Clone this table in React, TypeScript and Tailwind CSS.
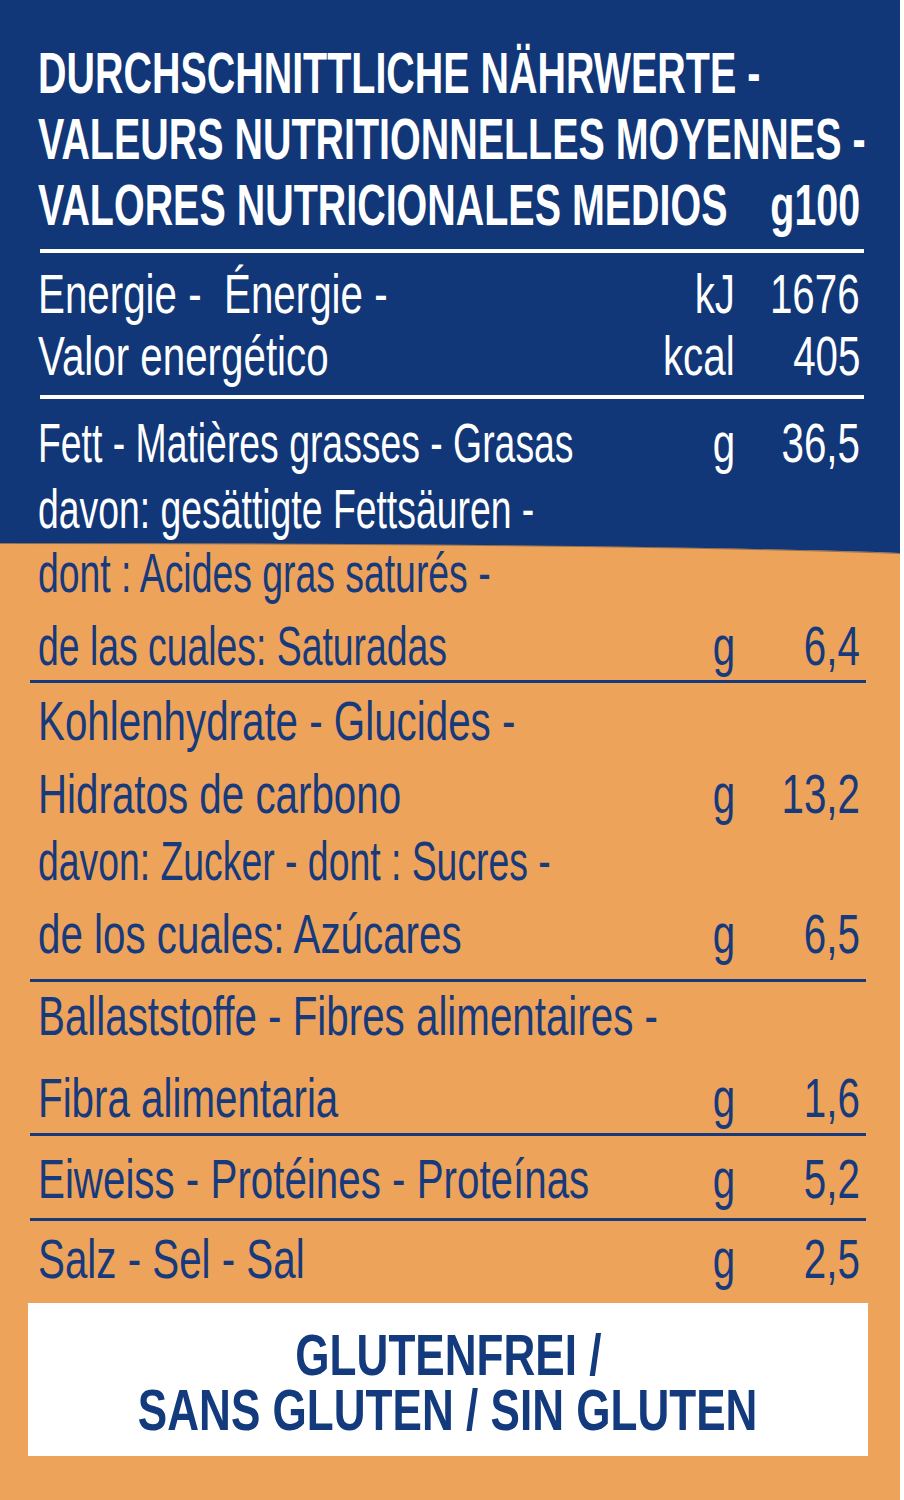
import type { ReactNode } from "react";

const FONT = "font-['Liberation_Sans','Arial',sans-serif]";

// the label type is a condensed grotesk: squeeze Liberation Sans sideways
function Cond({ children, right, tight }: { children: ReactNode; right?: boolean; tight?: boolean }) {
  return (
    <span
      className={`inline-block whitespace-pre ${tight ? "[transform:scaleX(0.667)]" : "[transform:scaleX(0.72)]"} ${
        right ? "origin-right" : "origin-left"
      }`}
    >
      {children}
    </span>
  );
}

function HeadCond({ children, right }: { children: ReactNode; right?: boolean }) {
  return (
    <span
      className={`inline-block whitespace-pre [transform:scaleX(0.68)] ${right ? "origin-right" : "origin-left"}`}
    >
      {children}
    </span>
  );
}

type RowProps = {
  label: string;
  unit?: string;
  value?: string;
  box: string;
  tight?: boolean;
};

function Row({ label, unit, value, box, tight }: RowProps) {
  return (
    <div className={`flex pl-[38px] pr-[40px] text-[56px] ${box}`}>
      <div className="flex-1 min-w-0">
        <Cond tight={tight}>{label}</Cond>
      </div>
      <div className="w-[120px] text-right">{unit && <Cond right>{unit}</Cond>}</div>
      <div className="w-[125px] text-right">{value && <Cond right>{value}</Cond>}</div>
    </div>
  );
}

export default function App() {
  return (
    <div className={`w-[904px] h-[1500px] bg-white overflow-hidden ${FONT}`}>
      <div className="w-[900px] h-[1500px] bg-[#eea35b] text-[#163a7b] flex flex-col">
        {/* Blue block */}
        <div className="relative bg-[#113778] text-white pt-[40px] pb-[1px]">
          <div className="pl-[38px] pr-[40px] text-[58px] font-bold">
            <div className="h-[66px] leading-[66px]">
              <HeadCond>DURCHSCHNITTLICHE NÄHRWERTE -</HeadCond>
            </div>
            <div className="h-[66px] leading-[66px]">
              <HeadCond>VALEURS NUTRITIONNELLES MOYENNES -</HeadCond>
            </div>
            <div className="h-[66px] leading-[66px] flex">
              <div className="flex-1 min-w-0">
                <HeadCond>VALORES NUTRICIONALES MEDIOS</HeadCond>
              </div>
              <div className="text-right">
                <HeadCond right>g100</HeadCond>
              </div>
            </div>
          </div>

          <div className="mt-[11px] h-[4px] ml-[40px] mr-[36px] bg-white" />

          <div className="mt-[10px]">
            <Row label="Energie -  Énergie -" unit="kJ" value="1676" box="h-[62px] leading-[62px]" />
            <Row label="Valor energético" unit="kcal" value="405" box="h-[62px] leading-[62px]" />
          </div>

          <div className="mt-[8px] h-[4px] ml-[40px] mr-[36px] bg-white" />

          <div className="mt-[13px]">
            <Row label="Fett - Matières grasses - Grasas" unit="g" value="36,5" tight box="h-[62px] leading-[62px]" />
          </div>
          <div className="mt-[2px]">
            <Row label="davon: gesättigte Fettsäuren -" tight box="h-[66px] leading-[66px]" />
          </div>

          {/* curved bottom edge */}
          <svg
            className="absolute left-0 top-full"
            width="900"
            height="12"
            viewBox="0 0 900 12"
            preserveAspectRatio="none"
          >
            <path d="M0 0 H900 V10 Q 620 0 0 0 Z" fill="#113778" />
            <path d="M0 0.5 Q 620 0.5 900 10.5" fill="none" stroke="#3a3f4a" strokeOpacity="0.5" strokeWidth="1" />
          </svg>
        </div>

        {/* Orange block */}
        <Row label="dont : Acides gras saturés -" tight box="h-[60px] leading-[60px]" />
        <div className="mt-[12px]">
          <Row label="de las cuales: Saturadas" unit="g" value="6,4" tight box="h-[62px] leading-[62px]" />
        </div>
        <div className="mt-[3px] h-[3px] ml-[30px] mr-[34px] bg-[#163a7b]" />

        <div className="mt-[7px]">
          <Row label="Kohlenhydrate - Glucides -" box="h-[62px] leading-[62px]" />
        </div>
        <div className="mt-[11px]">
          <Row label="Hidratos de carbono" unit="g" value="13,2" box="h-[62px] leading-[62px]" />
        </div>
        <div className="mt-[5px]">
          <Row label="davon: Zucker - dont : Sucres -" tight box="h-[62px] leading-[62px]" />
        </div>
        <div className="mt-[11px]">
          <Row label="de los cuales: Azúcares" unit="g" value="6,5" box="h-[62px] leading-[62px]" />
        </div>
        <div className="mt-[14px] h-[3px] ml-[30px] mr-[34px] bg-[#163a7b]" />

        <div className="mt-[3px]">
          <Row label="Ballaststoffe - Fibres alimentaires -" box="h-[62px] leading-[62px]" />
        </div>
        <div className="mt-[20px]">
          <Row label="Fibra alimentaria" unit="g" value="1,6" box="h-[62px] leading-[62px]" />
        </div>
        <div className="mt-[4px] h-[3px] ml-[30px] mr-[34px] bg-[#163a7b]" />

        <div className="mt-[12px]">
          <Row label="Eiweiss - Protéines - Proteínas" unit="g" value="5,2" box="h-[62px] leading-[62px]" />
        </div>
        <div className="mt-[8px] h-[3px] ml-[30px] mr-[34px] bg-[#163a7b]" />

        <div className="mt-[7px]">
          <Row label="Salz - Sel - Sal" unit="g" value="2,5" box="h-[62px] leading-[62px]" />
        </div>

        {/* Gluten free box */}
        <div className="mt-[13px] ml-[28px] w-[840px] h-[153px] bg-white pt-[24px] text-center font-bold text-[58px] text-[#133a7c]">
          <div className="h-[55px] leading-[55px]">
            <span className="inline-block whitespace-nowrap [transform:scaleX(0.76)]">GLUTENFREI /</span>
          </div>
          <div className="h-[55px] leading-[55px]">
            <span className="inline-block whitespace-nowrap [transform:scaleX(0.76)]">SANS GLUTEN / SIN GLUTEN</span>
          </div>
        </div>
      </div>
    </div>
  );
}
